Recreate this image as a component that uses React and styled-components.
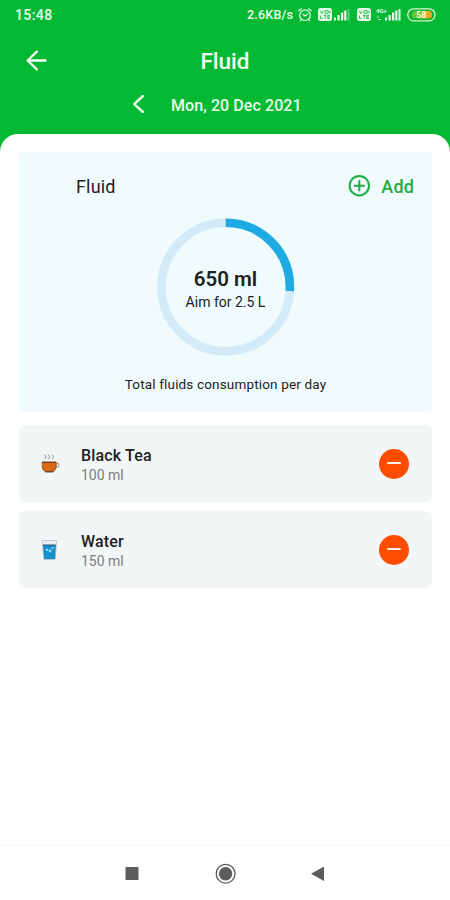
import React from "react";
import styled, { createGlobalStyle } from "styled-components";

const colors = {
	green: "#03b934",
	add: "#1fad42",
	card: "#effbfd",
	row: "#f2f6f6",
	track: "#d3ebf8",
	progress: "#1eaae3",
	remove: "#ff4d00",
	dark: "#1c2224",
	muted: "#7b8082",
	nav: "#5c5c5c",
};

const GlobalStyle = createGlobalStyle`
	* {
		box-sizing: border-box;
	}

	body {
		margin: 0;
		font-family: Roboto, "Liberation Sans", sans-serif;
		background-color: #ffffff;
	}

	svg {
		display: block;
		flex-shrink: 0;
	}

	button {
		padding: 0;
		border: none;
		background: none;
		font-family: inherit;
		cursor: pointer;
	}
`;

const Screen = styled.div`
	width: 100%;
	height: 100vh;
	display: flex;
	flex-direction: column;
	overflow: hidden;
	background-color: ${colors.green};
`;

const StatusBar = styled.div`
	height: 30px;
	display: flex;
	align-items: center;
	justify-content: space-between;
	padding: 0 14px 0 15px;
	color: #e9fbe9;
`;

const Clock = styled.span`
	font-size: 14px;
	font-weight: 500;
	letter-spacing: 0.4px;
`;

const StatusIcons = styled.div`
	display: flex;
	align-items: center;
`;

const Speed = styled.span`
	width: 50px;
	font-size: 12.5px;
	font-weight: 500;
	line-height: 14px;
	letter-spacing: 0.2px;
	white-space: nowrap;
`;

const Spacer = styled.span`
	width: ${({ $w }) => $w}px;
`;

const Header = styled.header`
	height: 61px;
	display: grid;
	grid-template-columns: 60px 1fr 60px;
	align-items: center;
	color: #f6fff4;
`;

const BackButton = styled.button`
	padding-left: 25px;
	color: inherit;
`;

const Title = styled.h1`
	margin: 0;
	font-size: 22.5px;
	font-weight: 500;
	line-height: 28px;
	text-align: center;
`;

const DateRow = styled.div`
	height: 43px;
	display: flex;
	align-items: flex-start;
	padding: 3px 0 0 132px;
	gap: 26px;
	color: #eafde8;
`;

const DateText = styled.span`
	font-size: 16px;
	font-weight: 500;
	line-height: 24px;
	letter-spacing: 0.08px;
`;

const Sheet = styled.main`
	flex: 1;
	padding: 18px 18px 0 19px;
	border-radius: 18px 18px 0 0;
	background-color: #ffffff;
`;

const SummaryCard = styled.section`
	height: 260px;
	display: flex;
	flex-direction: column;
	align-items: center;
	border-radius: 4px;
	background-color: ${colors.card};
`;

const CardHead = styled.div`
	width: 100%;
	height: 66px;
	display: flex;
	align-items: center;
	justify-content: space-between;
	padding: 2px 18px 0 57px;
`;

const CardTitle = styled.h2`
	margin: 0;
	font-size: 18px;
	font-weight: 400;
	letter-spacing: 0.15px;
	color: ${colors.dark};
`;

const AddButton = styled.button`
	display: flex;
	align-items: center;
	gap: 10px;
	font-size: 18px;
	font-weight: 500;
	letter-spacing: 0.15px;
	color: ${colors.add};
`;

const Ring = styled.div`
	width: 138px;
	height: 138px;
	display: grid;
	place-items: center;

	> * {
		grid-area: 1 / 1;
	}
`;

const RingText = styled.div`
	display: flex;
	flex-direction: column;
	align-items: center;
	padding-top: 6px;
	color: ${colors.dark};
`;

const Amount = styled.strong`
	font-size: 20.5px;
	font-weight: 600;
	line-height: 24px;
`;

const Aim = styled.span`
	font-size: 14px;
	line-height: 22px;
`;

const Caption = styled.p`
	margin: 18px 0 0;
	font-size: 13.5px;
	line-height: 20px;
	letter-spacing: 0.16px;
	color: ${colors.dark};
`;

const DrinkList = styled.ul`
	display: flex;
	flex-direction: column;
	gap: 9px;
	margin: 13px 0 0;
	padding: 0;
	list-style: none;
`;

const DrinkRow = styled.li`
	height: 77px;
	display: flex;
	align-items: center;
	padding: 0 23px 0 20px;
	border-radius: 6px;
	background-color: ${colors.row};
`;

const DrinkInfo = styled.div`
	flex: 1;
	display: flex;
	flex-direction: column;
	margin-left: 20px;
	padding-top: 1px;
`;

const DrinkName = styled.span`
	font-size: 16px;
	font-weight: 500;
	line-height: 21px;
	letter-spacing: 0.15px;
	color: ${colors.dark};
`;

const DrinkVolume = styled.span`
	font-size: 14px;
	line-height: 18px;
	color: ${colors.muted};
`;

const RemoveButton = styled.button`
	width: 30px;
	height: 30px;
	display: flex;
	align-items: center;
	justify-content: center;
	border-radius: 50%;
	background-color: ${colors.remove};

	&::before {
		content: "";
		width: 14px;
		height: 2px;
		margin-bottom: 1px;
		border-radius: 1px;
		background-color: #fff3ea;
	}
`;

const NavBar = styled.nav`
	height: 55px;
	display: flex;
	align-items: center;
	padding: 1px 0 0 122px;
	gap: 73px;
	border-top: 1px solid #f7f7f7;
	background-color: #ffffff;
`;

const AlarmIcon = () => (
	<svg width="16" height="16" viewBox="0 0 16 16" fill="none" stroke="currentColor" strokeWidth="1.2" strokeLinecap="round">
		<circle cx="8" cy="8.2" r="5.3" />
		<path d="M1.7 3.7 4.3 1.6M14.3 3.7l-2.6-2.1M5.8 7.1 8 9l2.6-1.8M4.3 12.7l-1 1.2M11.7 12.7l1 1.2" />
	</svg>
);

const VolteIcon = () => (
	<svg width="14" height="14" viewBox="0 0 14 14">
		<rect width="14" height="13" rx="2.5" fill="currentColor" />
		<path
			d="M2.2 2.7 3.7 5.5l1.5-2.8M7 2.7h3.2v2.6H7zM12 2.5v3M2.5 7.5v3h2M6 7.5h2.5M7.2 7.5v3M12 7.5H9.8v3H12M9.8 9h2"
			fill="none"
			stroke={colors.green}
			strokeWidth=".8"
		/>
	</svg>
);

const SignalBars = ({ fourG }) => (
	<svg width={fourG ? 25 : 17} height="16" viewBox={fourG ? "-9 0 25 16" : "0 0 17 16"} fill="currentColor">
		{fourG && (
			<>
				<text x="-9" y="5.8" fontSize="6" fontWeight="700">
					4G+
				</text>
				<path d="M-8 9.5h2v1h-2zM-7 12h3v1h-3z" opacity=".8" />
			</>
		)}
		<rect x="0" y="10.5" width="2" height="3" />
		<rect x="3.5" y="8" width="2.2" height="5.5" />
		<rect x="7" y="5.5" width="2.2" height="8" />
		<rect x="10.2" y="3.5" width="2.2" height="10" />
		<rect x="13.5" y="2" width="2" height="11.5" opacity={fourG ? 1 : 0.35} />
	</svg>
);

const BatteryIcon = () => (
	<svg width="29" height="14" viewBox="0 0 29 14">
		<rect x=".8" y=".8" width="27.2" height="12" rx="5.8" fill="none" stroke="#dcf5c4" strokeWidth="1.3" />
		<path d="M8 3h8v7.6H8Q5 10.6 5 6.8T8 3z" fill="#6cc433" />
		<path d="M15 3h7q3 0 3 3.8t-3 3.8h-7z" fill="#e9a61e" />
		<text x="14.3" y="10" fontSize="9" fontWeight="700" textAnchor="middle" fill="#fff9dc">
			58
		</text>
	</svg>
);

const TeaIcon = () => (
	<svg width="22" height="22" viewBox="0 0 22 22">
		<path
			d="M5.6 1.6 7 3.8 5.7 6.2M9.4 1.6l1.4 2.2-1.3 2.4M13.2 1.6l1.4 2.2-1.3 2.4"
			fill="none"
			stroke="#8e8f91"
			strokeWidth="1"
		/>
		<path d="M17 10.4h2q1.2 0 1 1.7-.4 2.5-4 2.4" fill="none" stroke="#b5ad93" strokeWidth="1.3" />
		<path d="M3.2 9.2h14v4q0 3.6-3 5.6H6.3q-3.1-2-3.1-5.6z" fill="#dc6812" stroke="#8d4b20" strokeWidth=".8" />
		<path d="M3.2 9.3h14" stroke="#6f3c20" strokeWidth="1.2" />
		<path d="M6 18.7h8.6" stroke="#62493a" strokeWidth="1.2" />
	</svg>
);

const WaterIcon = () => (
	<svg width="22" height="22" viewBox="0 0 22 22">
		<path d="M3.3 1.5h14.2l-1.2 19H4.8z" fill="#e8f1f3" stroke="#b4bdc0" strokeWidth=".8" />
		<path d="M3.9 6h13l-.9 14H5.1z" fill="#168fc8" />
		<path d="M3.8 6h13.2" stroke="#285c70" strokeWidth="1" />
		<circle cx="8" cy="10.8" r="1.1" fill="#bbedff" />
		<circle cx="11" cy="12" r="1.4" fill="#9be0f9" />
		<circle cx="13.4" cy="9" r=".9" fill="#a5e5fa" />
	</svg>
);

const RADIUS = 64.2;

const ProgressRing = ({ value, goal }) => (
	<svg width="138" height="138" viewBox="0 0 138 138" fill="none" strokeWidth="8.6">
		<circle cx="68.7" cy="69" r={RADIUS} stroke={colors.track} />
		<circle
			cx="68.7"
			cy="69"
			r={RADIUS}
			stroke={colors.progress}
			pathLength="100"
			strokeDasharray={`${(value / goal) * 100} 100`}
			transform="rotate(-90 68.7 69)"
		/>
	</svg>
);

const drinks = [
	{ name: "Black Tea", volume: 100, Icon: TeaIcon },
	{ name: "Water", volume: 150, Icon: WaterIcon },
];

const App = () => {
	return (
		<Screen>
			<GlobalStyle />
			<StatusBar>
				<Clock>15:48</Clock>
				<StatusIcons>
					<Speed>2.6KB/s</Speed>
					<AlarmIcon />
					<Spacer $w={5} />
					<VolteIcon />
					<Spacer $w={2} />
					<SignalBars />
					<Spacer $w={6} />
					<VolteIcon />
					<Spacer $w={5} />
					<SignalBars fourG />
					<Spacer $w={6} />
					<BatteryIcon />
				</StatusIcons>
			</StatusBar>
			<Header>
				<BackButton aria-label="Back">
					<svg width="23" height="22" viewBox="0 0 23 22" fill="none" stroke="currentColor" strokeWidth="2.4" strokeLinecap="round" strokeLinejoin="round">
						<path d="M20.5 10.5H2.7M11.8 1.7l-9.1 8.8 9.1 8.8" />
					</svg>
				</BackButton>
				<Title>Fluid</Title>
			</Header>
			<DateRow>
				<svg width="13" height="20" viewBox="0 0 13 20" fill="none" stroke="currentColor" strokeWidth="2.4" strokeLinecap="round" strokeLinejoin="round">
					<path d="m11 2-8.8 8.2L11 18" />
				</svg>
				<DateText>Mon, 20 Dec 2021</DateText>
			</DateRow>
			<Sheet>
				<SummaryCard>
					<CardHead>
						<CardTitle>Fluid</CardTitle>
						<AddButton>
							<svg width="23" height="23" viewBox="0 0 23 23" fill="none" stroke="currentColor" strokeWidth="2">
								<circle cx="11.3" cy="10.7" r="9.7" />
								<path d="M11.3 5.2v11M5.8 10.7h11" />
							</svg>
							Add
						</AddButton>
					</CardHead>
					<Ring>
						<ProgressRing value={650} goal={2500} />
						<RingText>
							<Amount>650 ml</Amount>
							<Aim>Aim for 2.5 L</Aim>
						</RingText>
					</Ring>
					<Caption>Total fluids consumption per day</Caption>
				</SummaryCard>
				<DrinkList>
					{drinks.map(({ name, volume, Icon }) => (
						<DrinkRow key={name}>
							<Icon />
							<DrinkInfo>
								<DrinkName>{name}</DrinkName>
								<DrinkVolume>{volume} ml</DrinkVolume>
							</DrinkInfo>
							<RemoveButton aria-label={`Remove ${name}`} />
						</DrinkRow>
					))}
				</DrinkList>
			</Sheet>
			<NavBar>
				<svg width="20" height="22" viewBox="0 0 20 22">
					<rect x="3.5" y="4" width="13" height="13" fill={colors.nav} />
				</svg>
				<svg width="22" height="22" viewBox="0 0 22 22">
					<circle cx="10.6" cy="10.7" r="9.4" fill="none" stroke={colors.nav} strokeWidth="1.3" />
					<circle cx="10.6" cy="10.7" r="6.7" fill={colors.nav} />
				</svg>
				<svg width="20" height="22" viewBox="0 0 20 22">
					<path d="M14 3.5v14.6L1 10.7z" fill={colors.nav} />
				</svg>
			</NavBar>
		</Screen>
	);
};

export default App;
